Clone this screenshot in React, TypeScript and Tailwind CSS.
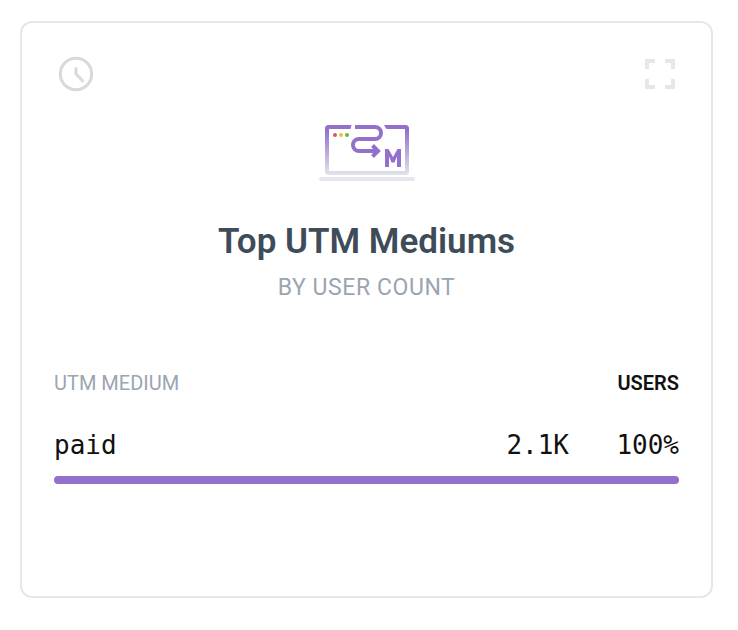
import React from "react";

type Row = { medium: string; users: string; percent: number };

const rows: Row[] = [{ medium: "paid", users: "2.1K", percent: 100 }];

function ClockIcon() {
  return (
    <svg viewBox="0 0 44 44" className="size-11" fill="none" stroke="#d9d9d9" strokeWidth="3" aria-hidden="true">
      <circle cx="22" cy="22" r="15.7" />
      <path d="M22 16.5v5.5l6.6 6.8" strokeLinecap="round" strokeLinejoin="round" />
    </svg>
  );
}

function ExpandIcon() {
  return (
    <svg viewBox="0 0 38 38" className="size-[38px]" fill="#e4e7eb" aria-hidden="true">
      <path d="M4 4h10v4H8v6H4zM24 4h10v10h-4V8h-6zM4 24h4v6h6v4H4zM30 24h4v10H24v-4h6z" />
    </svg>
  );
}

function MediumIllustration() {
  return (
    <svg viewBox="0 0 96 58" className="h-[58px] w-24" fill="none" aria-hidden="true">
      <defs>
        <linearGradient id="frame" x1="0" y1="1" x2="0" y2="51" gradientUnits="userSpaceOnUse">
          <stop offset="0.1" stopColor="#9370cc" />
          <stop offset="1" stopColor="#e2e5ea" />
        </linearGradient>
      </defs>
      <path
        d="M32.5 1H9.5A3.5 3.5 0 0 0 6 4.5v43A3.5 3.5 0 0 0 9.5 51h77a3.5 3.5 0 0 0 3.5-3.5v-43A3.5 3.5 0 0 0 86.5 1H65l2.500 4H86v42H10V5h21.500z"
        fill="url(#frame)"
      />
      <rect x="0" y="53" width="96" height="4" rx="2" fill="#e4e7eb" />
      <circle cx="16" cy="11" r="2" fill="#dc5a5f" />
      <circle cx="22" cy="11" r="2" fill="#f0bd3c" />
      <circle cx="28" cy="11" r="2" fill="#6fb63c" />
      <path
        d="M36 3h20a6 6 0 0 1 6 6a6 6 0 0 1-6 6H40a6 6 0 0 0-6 6a6 6 0 0 0 6 6h18"
        stroke="#9370cc"
        strokeWidth="4"
      />
      <path d="M53.5 21.5l5.5 5.5-5.5 5.500" stroke="#9370cc" strokeWidth="4" />
      <path d="M66 43V25h3.500l4.500 8 4.500-8H82v18h-4V32.500L75.500 38.500h-3L70 32.500V43z" fill="#9370cc" />
    </svg>
  );
}

export default function App() {
  return (
    <main className="min-h-screen bg-white pt-[21px] pr-[25px] pb-8 pl-5 font-['Roboto',sans-serif]">
      <section className="rounded-xl border-2 border-[#e4e7eb] bg-white px-8 pt-7 pb-28">
        <header className="flex h-[46px] items-center justify-between">
          <button type="button" aria-label="Time range">
            <ClockIcon />
          </button>
          <button type="button" aria-label="Expand">
            <ExpandIcon />
          </button>
        </header>

        <div className="mt-[27px] flex flex-col items-center text-center">
          <MediumIllustration />
          <h2 className="mt-10 text-[35px] leading-10 font-semibold text-[#3e4c59]">Top UTM Mediums</h2>
          <p className="mt-3 text-[23px] leading-7 tracking-wide text-[#9aa5b1]">BY USER COUNT</p>
        </div>

        <table className="mt-[61px] w-full">
          <thead className="text-xl leading-10">
            <tr>
              <th className="p-0 text-left font-normal text-[#9aa5b1]">UTM MEDIUM</th>
              <th colSpan={2} className="p-0 text-right font-semibold text-[#111]">
                USERS
              </th>
            </tr>
          </thead>
          <tbody className="font-['DejaVu_Sans_Mono',monospace] text-[26px] leading-10 text-[#111]">
            {rows.map((row) => (
              <React.Fragment key={row.medium}>
                <tr>
                  <td className="p-0 pt-[22px]">{row.medium}</td>
                  <td className="p-0 pt-[22px] text-right">{row.users}</td>
                  <td className="w-[110px] p-0 pt-[22px] text-right">{row.percent}%</td>
                </tr>
                <tr>
                  <td colSpan={3} className="p-0 pt-[11px]">
                    <div className="h-2 rounded-full bg-[#9370cc]" style={{ width: `${row.percent}%` }} />
                  </td>
                </tr>
              </React.Fragment>
            ))}
          </tbody>
        </table>
      </section>
    </main>
  );
}
